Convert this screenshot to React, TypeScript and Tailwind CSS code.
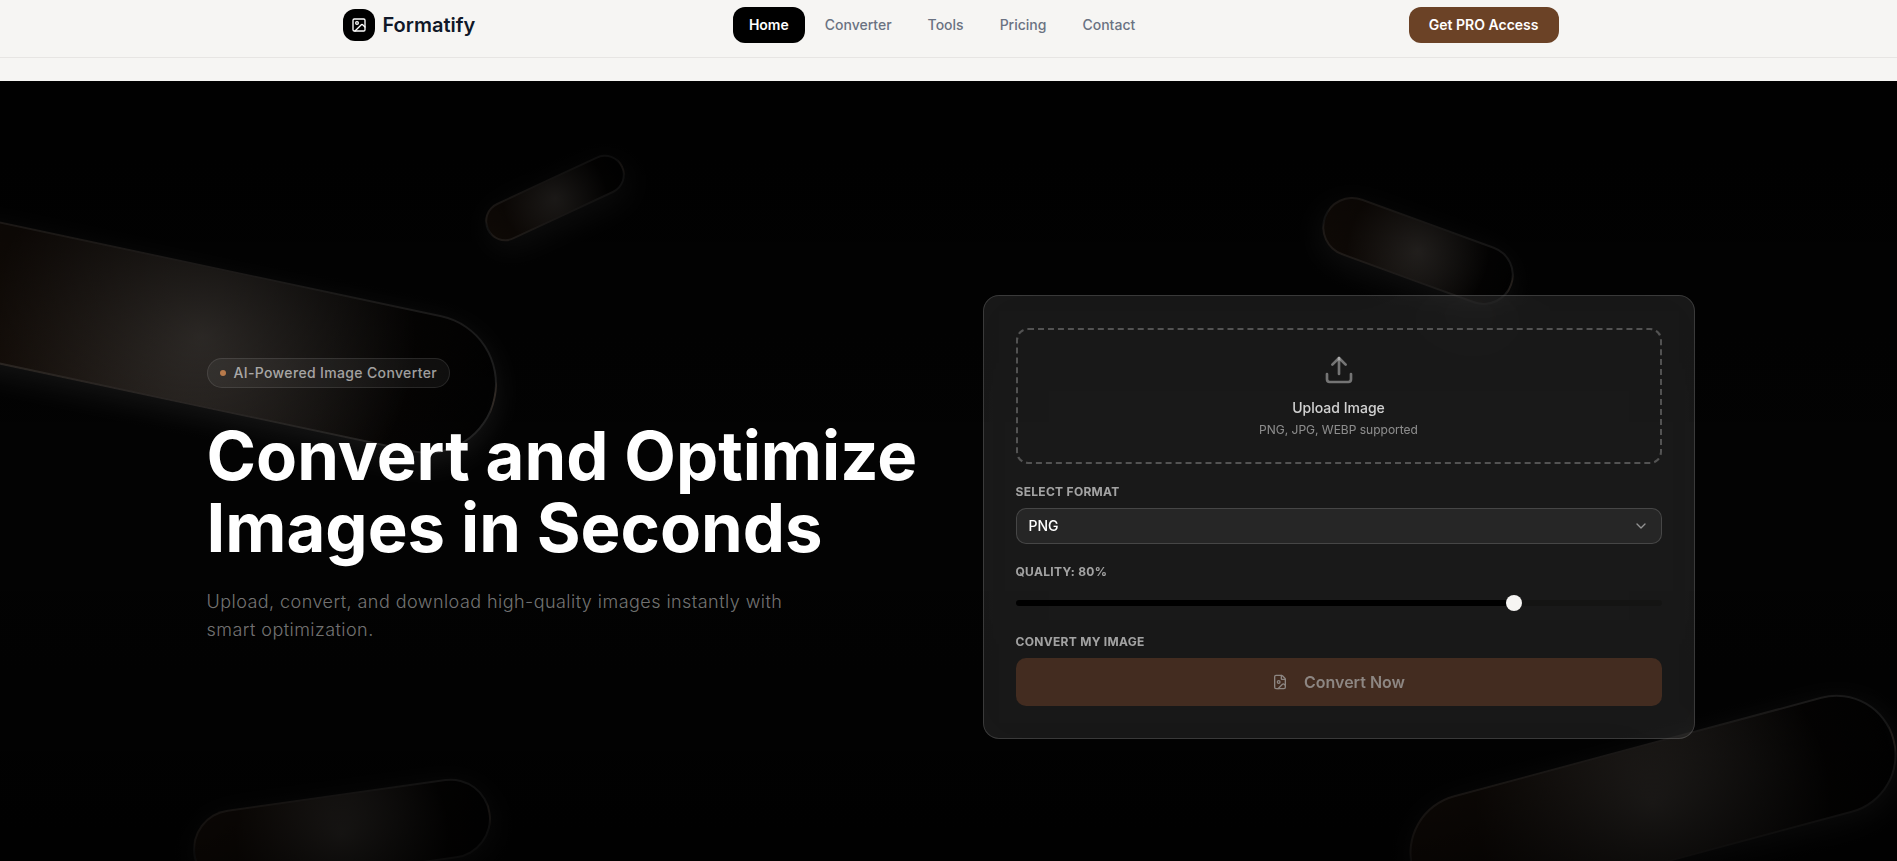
import React, { useState } from 'react'
import { ChevronDown, FileImage, Image as ImageIcon, Upload } from 'lucide-react'

const navLinks = ['Home', 'Converter', 'Tools', 'Pricing', 'Contact']

const shapes = [
    'left-[-98px] top-[185px] w-[600px] h-[140px] rotate-12',
    'right-[-6px] top-[663px] w-[500px] h-[120px] -rotate-[15deg]',
    'left-[192px] top-[713px] w-[300px] h-[80px] -rotate-[8deg]',
    'right-[20%] top-[140px] w-[200px] h-[60px] rotate-[20deg]',
    'left-[480px] top-[97px] w-[150px] h-[40px] -rotate-[25deg]',
]

const labelClass = 'block text-xs font-bold tracking-wide uppercase text-white/60'

const Header = () => {
    return (
        <header className="bg-[#f6f5f3] border-b border-[#e7e5e3] pl-1">
            <div className="flex items-center justify-between max-w-[1216px] mx-auto pt-[7px] pb-[14px]">
                <a href="#" className="flex items-center gap-2">
                    <span className="flex items-center justify-center size-8 rounded-xl bg-black text-white">
                        <ImageIcon size={16} />
                    </span>
                    <span className="text-xl font-semibold text-gray-900">Formatify</span>
                </a>
                <nav className="flex items-center gap-1">
                    {navLinks.map((link, i) => (
                        <a
                            key={link}
                            href="#"
                            className={
                                i === 0
                                    ? 'px-4 py-2 rounded-xl text-sm font-semibold bg-black text-white'
                                    : 'px-4 py-2 rounded-xl text-sm font-medium text-gray-500'
                            }
                        >
                            {link}
                        </a>
                    ))}
                </nav>
                <button className="h-9 px-5 rounded-xl bg-[#6b4226] text-sm font-semibold text-white">
                    Get PRO Access
                </button>
            </div>
        </header>
    )
}

const ConverterCard = () => {
    const [format, setFormat] = useState('png')
    const [quality, setQuality] = useState(80)

    const min = 10
    const filled = ((quality - min) / (100 - min)) * 100

    return (
        <form
            className="rounded-2xl border border-white/15 bg-white/9 backdrop-blur-xl p-8"
            onSubmit={(e: React.FormEvent) => e.preventDefault()}
        >
            <label className="flex flex-col items-center rounded-xl border-2 border-dashed border-white/25 py-6 cursor-pointer">
                <input type="file" accept="image/*" className="sr-only" />
                <Upload size={32} strokeWidth={2} className="text-white/40" />
                <span className="mt-3 text-sm font-medium text-white/80">Upload Image</span>
                <span className="mt-1 text-xs text-white/50">PNG, JPG, WEBP supported</span>
            </label>

            <div className="mt-5">
                <label htmlFor="format" className={labelClass}>Select Format</label>
                <div className="relative mt-2">
                    <select
                        id="format"
                        value={format}
                        onChange={(e) => setFormat(e.target.value)}
                        className="block w-full h-9 appearance-none rounded-[10px] border border-white/15 bg-white/6 px-3 text-sm font-medium text-white"
                    >
                        <option value="png">PNG</option>
                        <option value="jpg">JPG</option>
                        <option value="webp">WEBP</option>
                    </select>
                    <ChevronDown size={16} className="absolute right-[13px] top-2.5 text-white/50 pointer-events-none" />
                </div>
            </div>

            <div className="mt-5">
                <label htmlFor="quality" className={labelClass}>Quality: {quality}%</label>
                <div className="flex items-center mt-2 h-[30px]">
                    <input
                        id="quality"
                        type="range"
                        min={min}
                        max={100}
                        value={quality}
                        onChange={(e) => setQuality(Number(e.target.value))}
                        style={{ background: `linear-gradient(to right, #000 ${filled}%, #141413 ${filled}%)` }}
                        className="w-full h-1.5 appearance-none rounded-full [&::-webkit-slider-thumb]:appearance-none [&::-webkit-slider-thumb]:size-4 [&::-webkit-slider-thumb]:rounded-full [&::-webkit-slider-thumb]:bg-[#f6f5f3]"
                    />
                </div>
            </div>

            <div className="mt-4">
                <label htmlFor="convert" className={labelClass}>Convert My Image</label>
                <button
                    id="convert"
                    className="flex items-center justify-center gap-4 w-full h-12 mt-2 rounded-[10px] bg-[#432c20] font-semibold text-[#8d8682]"
                >
                    <FileImage size={16} />
                    Convert Now
                </button>
            </div>
        </form>
    )
}

const App = () => {
    return (
        <div className="h-screen overflow-hidden bg-[#f6f5f3] font-['Inter',sans-serif]">
            <Header />
            <section className="relative flex items-center min-h-screen mt-[23px] pt-2.5 pl-1 overflow-hidden bg-[#030303]">
                {shapes.map((shape) => (
                    <div
                        key={shape}
                        className={`absolute rounded-full border-2 border-white/15 bg-linear-to-r from-[#6b4226]/25 to-transparent shadow-[0_8px_32px_0_rgba(255,255,255,0.1)] ${shape}`}
                    >
                        <div className="size-full rounded-full bg-[radial-gradient(circle_at_50%_50%,rgba(255,250,244,0.2),transparent_70%)]" />
                    </div>
                ))}
                <div className="absolute inset-0 bg-linear-to-b from-black/80 via-transparent to-black/90 pointer-events-none" />

                <div className="relative grid lg:grid-cols-2 items-center gap-16 w-full max-w-[1488px] mx-auto">
                    <div className="pb-8">
                        <div className="inline-flex items-center gap-2 h-[30px] px-3 mb-8 rounded-full border border-white/10 bg-white/5 align-top">
                            <span className="size-1.5 rounded-full bg-[#b87a4b]" />
                            <span className="text-sm font-medium tracking-wide text-white/60">AI-Powered Image Converter</span>
                        </div>
                        <h1 className="text-[67px] leading-[72px] font-bold text-white">
                            Convert and Optimize Images in Seconds
                        </h1>
                        <p className="mt-6 max-w-[600px] text-lg leading-7 font-light tracking-wide text-white/45">
                            Upload, convert, and download high-quality images instantly with smart optimization.
                        </p>
                    </div>
                    <ConverterCard />
                </div>
            </section>
        </div>
    )
}

export default App
